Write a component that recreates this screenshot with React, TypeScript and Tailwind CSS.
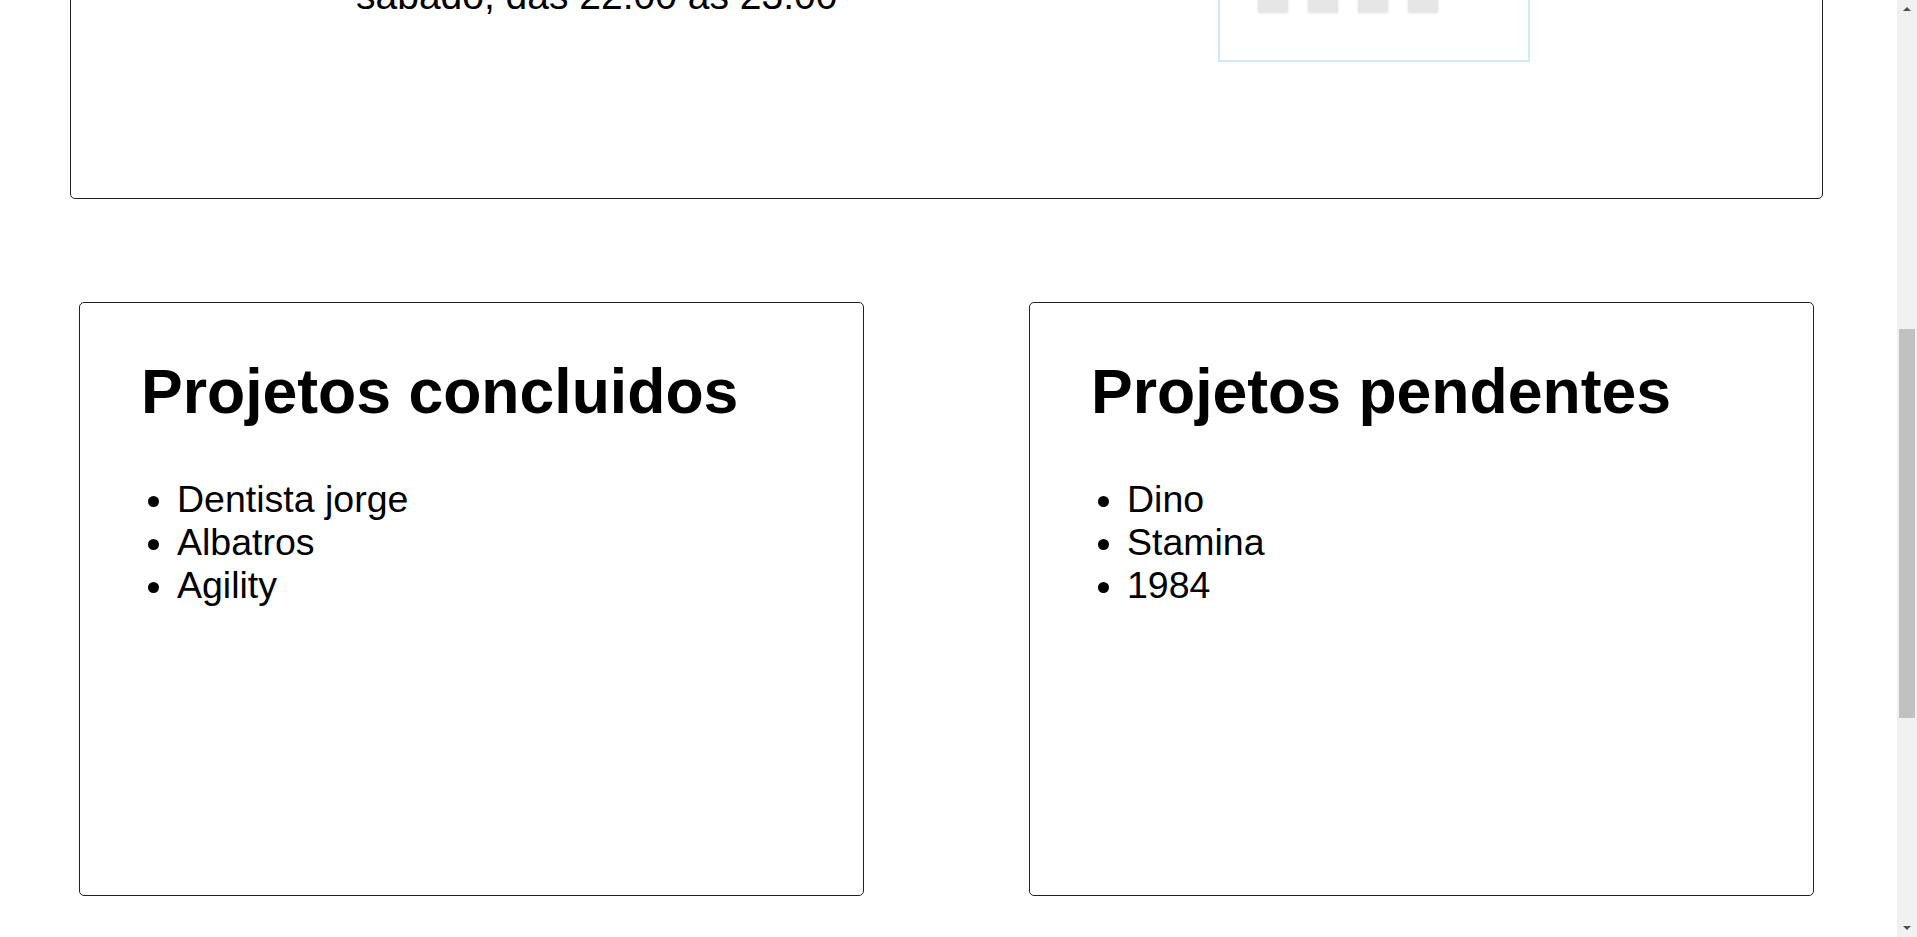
export default function App() {
  const concluidos = ["Dentista jorge", "Albatros", "Agility"]
  const pendentes = ["Dino", "Stamina", "1984"]

  return (
    <div className="flex h-[937px] w-full overflow-hidden bg-white text-black font-['Liberation_Sans',Arial,sans-serif]">
      {/* page (scrolled) */}
      <div className="flex-1 min-w-0">
        {/* schedule box, upper part scrolled out of view */}
        <section className="-mt-[202px] ml-[70px] w-[1753px] h-[401px] border border-[#222] rounded-[5px] flex items-start">
          <div className="w-[1147px] shrink-0 pl-[285px] pt-[175px]">
            <p className="text-[39px] leading-[normal]">sábado, das 22:00 às 23:00</p>
          </div>
          <div className="mt-[23px] w-[312px] h-[240px] border-2 border-[#cfeaf6] bg-white">
            <div className="mt-[158px] pl-[38px] flex gap-[20px]">
              <div className="w-[30px] h-[30px] bg-[#e6e6e6] shadow-sm"></div>
              <div className="w-[30px] h-[30px] bg-[#e6e6e6] shadow-sm"></div>
              <div className="w-[30px] h-[30px] bg-[#e6e6e6] shadow-sm"></div>
              <div className="w-[30px] h-[30px] bg-[#e6e6e6] shadow-sm"></div>
            </div>
          </div>
        </section>

        {/* projetos */}
        <section className="mt-[103px] pl-[79px] flex gap-[165px]">
          <div className="w-[785px] h-[594px] border border-[#222] rounded-[5px] pl-[61px] pt-[52px]">
            <h1 className="text-[62.5px] font-bold leading-[normal] mb-[51px]">Projetos concluidos</h1>
            <ul className="list-disc pl-[36px] text-[37.5px] leading-[normal]">
              {concluidos.map((p) => (
                <li key={p}>{p}</li>
              ))}
            </ul>
          </div>
          <div className="w-[785px] h-[594px] border border-[#222] rounded-[5px] pl-[61px] pt-[52px]">
            <h1 className="text-[62.5px] font-bold leading-[normal] mb-[51px]">Projetos pendentes</h1>
            <ul className="list-disc pl-[36px] text-[37.5px] leading-[normal]">
              {pendentes.map((p) => (
                <li key={p}>{p}</li>
              ))}
            </ul>
          </div>
        </section>
      </div>

      {/* scrollbar */}
      <div className="w-[20px] shrink-0 bg-[#f1f1f1] flex flex-col">
        <div className="h-[17px] flex items-center justify-center">
          <svg width="8" height="5" viewBox="0 0 8 5">
            <path d="M0 5 L4 1 L8 5 Z" fill="#505050" />
          </svg>
        </div>
        <div className="flex-1 px-[2px]">
          <div className="mt-[312px] h-[389px] bg-[#c1c1c1]"></div>
        </div>
        <div className="h-[17px] flex items-center justify-center">
          <svg width="8" height="5" viewBox="0 0 8 5">
            <path d="M0 0 L4 4 L8 0 Z" fill="#505050" />
          </svg>
        </div>
      </div>
    </div>
  )
}
